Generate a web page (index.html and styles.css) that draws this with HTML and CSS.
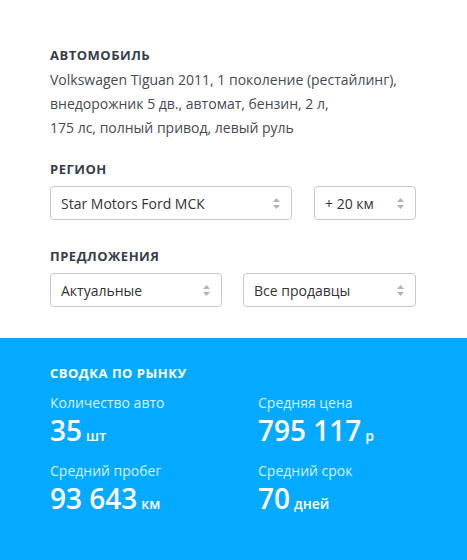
FILE: index.html
```html
<!DOCTYPE html>
<html lang="ru">
<head>
<meta charset="utf-8">
<link rel="stylesheet" href="styles.css">
</head>
<body>
<section class="form">
  <h2 class="title">АВТОМОБИЛЬ</h2>
  <p class="car">Volkswagen Tiguan 2011, 1 поколение (рестайлинг),<br>внедорожник 5 дв., автомат, бензин, 2 л,<br>175 лс, полный привод, левый руль</p>

  <h2 class="title title-gap">РЕГИОН</h2>
  <div class="row row-region">
    <div class="select"><span>Star Motors Ford МСК</span><svg class="arrows" width="7" height="11" viewBox="0 0 7 11"><path d="M3.5 0L7 4H0Z M0 7H7L3.5 11Z" fill="#b3b3b3"/></svg></div>
    <div class="select"><span>+ 20 км</span><svg class="arrows" width="7" height="11" viewBox="0 0 7 11"><path d="M3.5 0L7 4H0Z M0 7H7L3.5 11Z" fill="#b3b3b3"/></svg></div>
  </div>

  <h2 class="title title-gap2">ПРЕДЛОЖЕНИЯ</h2>
  <div class="row row-offers">
    <div class="select"><span>Актуальные</span><svg class="arrows" width="7" height="11" viewBox="0 0 7 11"><path d="M3.5 0L7 4H0Z M0 7H7L3.5 11Z" fill="#b3b3b3"/></svg></div>
    <div class="select"><span>Все продавцы</span><svg class="arrows" width="7" height="11" viewBox="0 0 7 11"><path d="M3.5 0L7 4H0Z M0 7H7L3.5 11Z" fill="#b3b3b3"/></svg></div>
  </div>
</section>

<section class="market">
  <h2 class="title light">СВОДКА ПО РЫНКУ</h2>
  <div class="stats">
    <div class="stat">
      <div class="label">Количество авто</div>
      <div class="value">35<span class="unit">шт</span></div>
    </div>
    <div class="stat">
      <div class="label">Средняя цена</div>
      <div class="value">795 117<span class="unit">р</span></div>
    </div>
    <div class="stat">
      <div class="label">Средний пробег</div>
      <div class="value">93 643<span class="unit">км</span></div>
    </div>
    <div class="stat">
      <div class="label">Средний срок</div>
      <div class="value">70<span class="unit">дней</span></div>
    </div>
  </div>
</section>
</body>
</html>
```

FILE: styles.css
```css
* { box-sizing: border-box; }
html, body { margin: 0; padding: 0; }
body {
  font-family: "Open Sans", "Noto Sans", sans-serif;
  background: #fff;
  width: 467px;
  height: 560px;
  overflow: hidden;
}
.form {
  padding: 46px 50px 31px 50px;
}
.title {
  margin: 0;
  font-size: 13px;
  line-height: 18px;
  font-weight: 700;
  color: #363d48;
  letter-spacing: 0.5px;
}
.car {
  margin: 4px 0 0 0;
  font-size: 14px;
  line-height: 24px;
  color: #444a52;
}
.title-gap { margin-top: 20px; }
.title-gap2 { margin-top: 27px; }
.row {
  display: grid;
  margin-top: 8px;
}
.row-region { grid-template-columns: 242px 102px; column-gap: 22px; }
.row-offers { grid-template-columns: 172px 173px; column-gap: 21px; }
.select {
  height: 34px;
  border: 1px solid #c8c8c8;
  border-radius: 4px;
  display: flex;
  align-items: center;
  justify-content: space-between;
  padding: 0 11px 0 10px;
  font-size: 14px;
  color: #333;
}
.arrows { display: block; }
.market {
  background: #03aaff;
  color: #fff;
  padding: 26px 50px 0 50px;
  height: 222px;
}
.title.light { color: #fff; }
.stats {
  display: grid;
  grid-template-columns: 208px 1fr;
  row-gap: 8px;
  margin-top: 11px;
}
.label {
  font-size: 14px;
  line-height: 20px;
  color: rgba(255,255,255,0.85);
}
.value {
  font-size: 28px;
  line-height: 34px;
  font-weight: 600;
}
.unit {
  font-size: 14px;
  font-weight: 600;
  margin-left: 4px;
}
```
